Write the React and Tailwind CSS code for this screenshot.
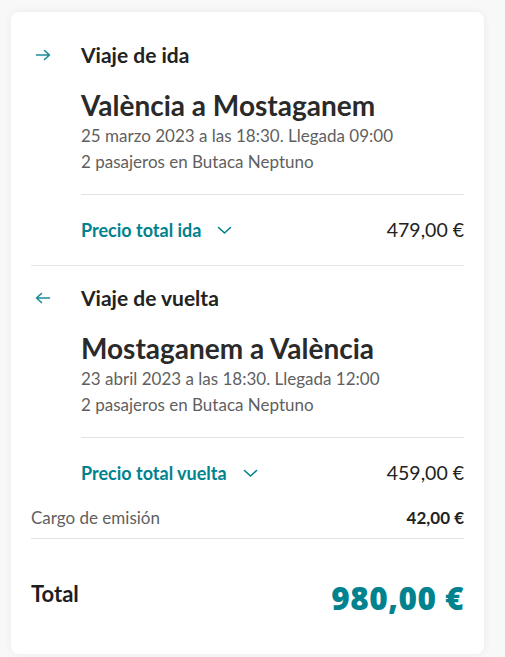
const teal = 'text-[#00828f]';

function Arrow({ back }) {
  return (
    <svg width="16" height="12" viewBox="0 0 16 12" fill="none" stroke="#1a8a98" strokeWidth="1.6" strokeLinecap="round" strokeLinejoin="round" className={back ? 'rotate-180' : ''}>
      <path d="M1.5 6h13M9.5 1.5 14.5 6l-5 4.5" />
    </svg>
  );
}

function Chevron() {
  return (
    <svg width="15" height="9" viewBox="0 0 15 9" fill="none" stroke="#00828f" strokeWidth="1.6" strokeLinecap="round" strokeLinejoin="round">
      <path d="M1.5 1.5 7.5 7l6-5.5" />
    </svg>
  );
}

function Trip({ back, label, route, date, pax, priceLabel, price }) {
  return (
    <div>
      <div className="flex items-center h-[28px]">
        <div className="w-[50px] pl-[4px] flex items-center"><Arrow back={back} /></div>
        <h3 className="text-[21px] font-bold text-[#222] leading-[28px]">{label}</h3>
      </div>
      <div className="pl-[50px]">
        <h2 className="text-[28px] font-bold text-[#2a2a2a] leading-[34px] mt-[19px]">{route}</h2>
        <p className="text-[17px] text-[#5f5f5f] leading-[26px] mt-[1px]">{date}</p>
        <p className="text-[17px] text-[#5f5f5f] leading-[26px]">{pax}</p>
        <div className="border-t border-[#e3e3e3] mt-[19px]" />
        <div className="flex items-center justify-between h-[70px]">
          <div className="flex items-center">
            <span className={`text-[18px] font-bold ${teal}`}>{priceLabel}</span>
            <span className="ml-[16px] flex items-center"><Chevron /></span>
          </div>
          <span className="text-[19.5px] text-[#222]">{price}</span>
        </div>
      </div>
    </div>
  );
}

export default function App() {
  return (
    <div className="min-h-screen bg-[#f8f8f8] pt-[12px] pl-[11px] pr-[21px] pb-[3px]" style={{ fontFamily: 'Lato, "Open Sans", sans-serif' }}>
      <div className="bg-white rounded-[8px] shadow-[0_0_8px_rgba(0,0,0,0.06)] px-[20px] pt-[29px] pb-[36px] w-[473px]">
        <Trip
          label="Viaje de ida"
          route="València a Mostaganem"
          date="25 marzo 2023 a las 18:30. Llegada 09:00"
          pax="2 pasajeros en Butaca Neptuno"
          priceLabel="Precio total ida"
          price="479,00 €"
        />
        <div className="border-t border-[#e3e3e3] mb-[18px]" />
        <Trip
          back
          label="Viaje de vuelta"
          route="Mostaganem a València"
          date="23 abril 2023 a las 18:30. Llegada 12:00"
          pax="2 pasajeros en Butaca Neptuno"
          priceLabel="Precio total vuelta"
          price="459,00 €"
        />
        <div className="flex items-center justify-between -mt-[7px] h-[34px]">
          <span className="text-[17px] text-[#5f5f5f]">Cargo de emisión</span>
          <span className="text-[17px] font-bold text-[#222]">42,00 €</span>
        </div>
        <div className="border-t border-[#e3e3e3] mt-[3px]" />
        <div className="flex items-start justify-between pt-[38px]">
          <span className="text-[22px] font-bold text-[#1e1e1e] leading-[28px] mt-[3px]">Total</span>
          <span className={`text-[31.5px] ${teal} tracking-[0.5px] leading-[40px] mt-[1px]`} style={{ fontFamily: '"Open Sans", sans-serif', fontWeight: 800 }}>980,00 €</span>
        </div>
      </div>
    </div>
  );
}
